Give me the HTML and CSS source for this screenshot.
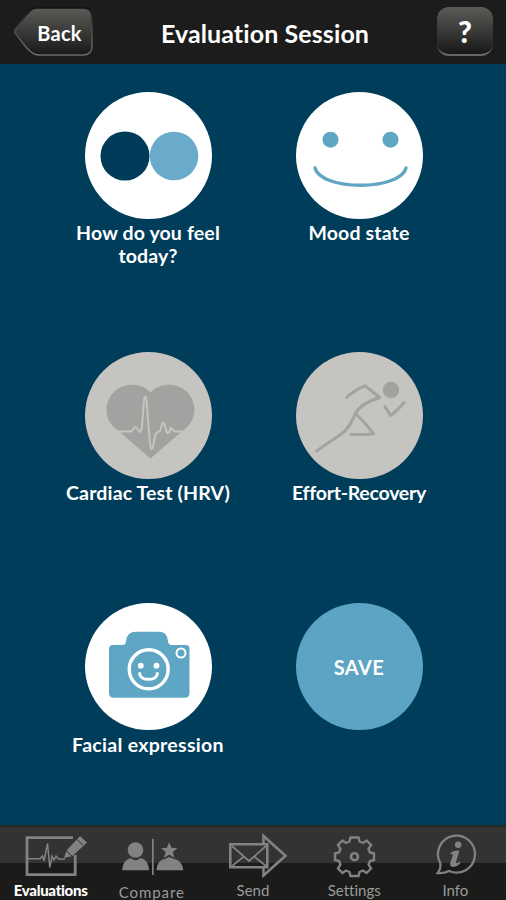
FILE: index.html
```
<!DOCTYPE html>
<html lang="en">
    <head>
        <meta charset="UTF-8">
        <title>Evaluation Session</title>
        <link rel="stylesheet" href="styles.css">
    </head>
    <body>
        <header class="header">
            <button class="back">
                <svg class="back-shape" viewBox="0 0 80 52">
                    <defs>
                        <linearGradient id="shade" x1="0" y1="0" x2="0" y2="1">
                            <stop offset="0" stop-color="#5b5b58"/>
                            <stop offset="0.5" stop-color="#3a3a38"/>
                            <stop offset="1" stop-color="#181818"/>
                        </linearGradient>
                        <linearGradient id="edge" x1="0" y1="0" x2="0" y2="1">
                            <stop offset="0" stop-color="#111"/>
                            <stop offset="0.45" stop-color="#484848"/>
                            <stop offset="1" stop-color="#6c6c6c"/>
                        </linearGradient>
                    </defs>
                    <path d="M22 2H69Q78 2 78 11V40Q78 49 69 49H25Q20 49 16 45C10 40 6 33 1 27Q0 25.500 1 24C6 17 11 10 16 5Q19 2 22 2Z" fill="url(#shade)" stroke="url(#edge)" stroke-width="1.500"/>
                </svg>
                <span class="back-text">Back</span>
            </button>
            <h1 class="title">Evaluation Session</h1>
            <button class="help">?</button>
        </header>
        <main class="tests">
            <div class="test">
                <svg class="circle" viewBox="0 0 127 127">
                    <circle cx="63.500" cy="63.500" r="63.500" fill="#fff"/>
                    <circle cx="40" cy="64" r="24.500" fill="#003b5a"/>
                    <circle cx="89" cy="64" r="24.300" fill="#69abc8"/>
                </svg>
                <div class="name">How do you feel<br>today?</div>
            </div>
            <div class="test">
                <svg class="circle" viewBox="0 0 127 127">
                    <circle cx="63.500" cy="63.500" r="63.500" fill="#fff"/>
                    <circle cx="34.500" cy="47.700" r="8" fill="#5fa6c4"/>
                    <circle cx="94.500" cy="47.700" r="8" fill="#5fa6c4"/>
                    <path d="M19 76C22 87 42 93.300 64.500 93.300S107 87 110 76" fill="none" stroke="#5fa6c4" stroke-width="3.400" stroke-linecap="round"/>
                </svg>
                <div class="name">Mood state</div>
            </div>
            <div class="test">
                <svg class="circle" viewBox="0 0 127 127">
                    <circle cx="63.500" cy="63.500" r="63.500" fill="#c5c4c0"/>
                    <path d="M65.500 40.500C56 30 39 30.500 29 40C19 50 19 66 29 75L65.500 106.500L102 75C112 66 112 50 102 40C92 30.500 75 30 65.500 40.500Z" fill="#a2a2a1"/>
                    <path d="M33 79.500H46L48.500 77Q50.500 73 52.500 77L54.500 80Q56.500 79.500 57 74L59 48Q60.200 41 61.500 48L65 92Q66.500 102 68.500 92L70.500 82Q73 79.500 75 79L77.500 71Q79 69.500 80 74L82 81Q84.500 82 85.500 76Q88 77 89.500 79.500H98" fill="none" stroke="#c5c4c0" stroke-width="2" stroke-linejoin="round"/>
                </svg>
                <div class="name">Cardiac Test (HRV)</div>
            </div>
            <div class="test">
                <svg class="circle" viewBox="0 0 127 127">
                    <circle cx="63.500" cy="63.500" r="63.500" fill="#c5c4c0"/>
                    <circle cx="95" cy="38" r="8.200" fill="#a2a2a1"/>
                    <g fill="none" stroke="#a2a2a1" stroke-width="3" stroke-linecap="round" stroke-linejoin="round">
                        <path d="M50.500 45.500Q59 38 69 33.700L83.500 45.500C74 48.500 64 53 59.500 61.500C55 71 52 77 46 81.500C38 87 29 93 20.500 99"/>
                        <path d="M59.500 61.500Q70 71 77.500 81.700Q66 83 55 82.300"/>
                        <path d="M89 54.500L94.500 63.500Q101 59 108 50.500"/>
                    </g>
                </svg>
                <div class="name effort">Effort-Recovery</div>
            </div>
            <div class="test">
                <svg class="circle" viewBox="0 0 127 127">
                    <circle cx="63.500" cy="63.500" r="63.500" fill="#fff"/>
                    <path d="M28 42H37Q41 42 41 38Q42 28.700 51 28.700H74Q82 28.700 83 38Q83 42 87 42H100.500Q104.500 42 104.500 46V90Q104.500 94.700 100 94.700H28.500Q24 94.700 24 90V46Q24 42 28 42Z" fill="#5fa6c4"/>
                    <g fill="none" stroke="#fff">
                        <circle cx="63.700" cy="66.300" r="19.500" stroke-width="3.400"/>
                        <circle cx="96" cy="50" r="4.500" stroke-width="2"/>
                        <path d="M54.700 70.500C55 78.300 72 78.300 72.300 70.500" stroke-width="3" stroke-linecap="round"/>
                    </g>
                    <circle cx="55.800" cy="62.700" r="2.900" fill="#fff"/>
                    <circle cx="71.500" cy="62.700" r="2.900" fill="#fff"/>
                </svg>
                <div class="name facial">Facial expression</div>
            </div>
            <div class="test">
                <button class="save">SAVE</button>
            </div>
        </main>
        <nav class="tabs">
            <div class="tab active">
                <svg class="icon" viewBox="0 0 80 48" fill="none" stroke="#808283">
                    <path d="M62 7.700H16V44.700H64.200V25" stroke-width="2.800"/>
                    <path d="M17 28.700H29L31.500 26L33 31L36.500 13.500L38.800 37.500L41 26L43 30L45 26L47.500 29H54" stroke-width="1.500"/>
                    <path d="M53 28L55.500 20.500L69 6L76 12.500L61.500 26Z" fill="#808283" stroke="none"/>
                    <path d="M66 9.500L72 15M55 20.500L61.500 26.500" stroke="#30302f" stroke-width="1"/>
                </svg>
                <span class="label">Evaluations</span>
            </div>
            <div class="tab">
                <svg class="icon" viewBox="0 0 80 48" fill="#808283">
                    <circle cx="23.500" cy="20" r="7.800"/>
                    <path d="M10.200 40.300C10.500 32 16 28 19 28.300Q23.500 32 28 28.300C32 28 36.800 32 37 40.300Z"/>
                    <path d="M40 9H41.700V45H40Z"/>
                    <path d="M57.200 12L59.400 17.800L65.500 18.200L60.700 22L62.400 28L57.200 24.600L52 28L53.700 22L49 18.200L55 17.800Z"/>
                    <path d="M44.500 40.300C45 32 50 29 53 29L57.200 27L62 29C66 29.500 71 33 71.200 40.300Z"/>
                </svg>
                <span class="label compare">Compare</span>
            </div>
            <div class="tab">
                <svg class="icon" viewBox="0 0 80 48" fill="none" stroke="#808283">
                    <path d="M17.300 14.300H54.300V37.300H17.300Z" stroke-width="2.600"/>
                    <path d="M50.500 13V6L72.500 25.700L50.500 45.500V38" stroke-width="2.600"/>
                    <path d="M19 16L36 31L53 16M19 36L31 26.500M53 36L41 26.500" stroke-width="1.700"/>
                </svg>
                <span class="label">Send</span>
            </div>
            <div class="tab">
                <svg class="icon" viewBox="0 0 80 48" fill="none" stroke="#808283" stroke-width="2.400">
                    <path d="M36.500 7.500H44.500L45.500 11.500L49 13L52.500 10.500L57 15L54.500 19L56 22.500L60 23.500V30L56 31L54.500 34.500L57 38.500L52.500 43L49 40.500L45.500 42L44.500 46H36.500L35.500 42L32 40.500L28.500 43L24 38.500L26.500 34.500L25 31L21 30V23.500L25 22.500L26.500 19L24 15L28.500 10.500L32 13L35.500 11.500Z"/>
                    <circle cx="40.500" cy="26.700" r="3.500" stroke-width="2.600"/>
                </svg>
                <span class="label">Settings</span>
            </div>
            <div class="tab">
                <svg class="icon" viewBox="0 0 80 48" fill="none" stroke="#808283">
                    <path d="M25.300 33A18.500 18.500 0 1 1 34 41Q29 43.500 22.800 43Q26 39 25.300 33Z" stroke-width="2.300"/>
                    <circle cx="43.200" cy="14.800" r="3.200" fill="#808283" stroke="none"/>
                    <path d="M35 23.500Q38.500 20 44.500 20.500L41 32Q41 34.500 44.500 31.500L45.500 33Q42 37 38 37Q34 36.500 35.500 32L38 24.500Q37 23.500 35.500 24.500Z" fill="#808283" stroke="none"/>
                </svg>
                <span class="label">Info</span>
            </div>
        </nav>
    </body>
</html>
```
FILE: styles.css
```
body {
    margin: 0;
    height: 900px;
    display: flex;
    flex-direction: column;
    overflow: hidden;
    background: #003d5b;
    color: #fff;
    font-family: Lato, "Liberation Sans", sans-serif;
    font-variant-ligatures: none;
}
button {
    padding: 0;
    border: 0;
    color: #fff;
    font-family: inherit;
    font-weight: bold;
}
.header {
    height: 64px;
    box-sizing: border-box;
    padding: 6px 14px 0;
    display: grid;
    grid-template-columns: 80px 1fr 56px;
    background: #1c1c1c;
}
.back {
    display: grid;
    height: 52px;
    background: none;
    font-size: 20px;
}
.back-shape,
.back-text {
    grid-area: 1 / 1;
}
.back-shape {
    width: 80px;
    height: 52px;
}
.back-text {
    padding: 14px 0 0 11px;
    line-height: 26px;
    letter-spacing: 0.3px;
}
.title {
    margin: 0;
    padding-left: 0;
    font-size: 25px;
    line-height: 55px;
    letter-spacing: 0.1px;
    text-align: center;
    white-space: nowrap;
}
.help {
    width: 56px;
    height: 49px;
    margin: 1px 0 0 1px;
    border-radius: 12px;
    border-bottom: 2px solid #666;
    background: linear-gradient(#5b5b58, #3a3a38 50%, #181818);
    font-size: 30px;
    font-weight: 900;
}
.tests {
    flex: 1;
    padding: 28px 0 0 1px;
    display: grid;
    grid-template-columns: 211px 211px;
    grid-template-rows: 260px 251px 1fr;
    justify-content: center;
}
.test {
    display: flex;
    flex-direction: column;
    align-items: center;
}
.circle {
    width: 127px;
    height: 127px;
}
.name {
    margin-top: 2px;
    font-size: 19.5px;
    font-weight: bold;
    line-height: 23px;
    letter-spacing: 0.15px;
    text-align: center;
    white-space: nowrap;
}
.effort {
    letter-spacing: -0.25px;
}
.facial {
    margin-top: 3px;
    letter-spacing: 0.3px;
}
.save {
    width: 127px;
    height: 127px;
    border-radius: 50%;
    background: #5ba4c4;
    font-size: 20px;
    letter-spacing: 0.4px;
}
.tabs {
    height: 75px;
    box-sizing: border-box;
    border-top: 2px solid #222827;
    padding-top: 3px;
    display: grid;
    grid-template-columns: repeat(5, 1fr);
    background: linear-gradient(#333331 36px, #1b1b1a 36px);
}
.tab {
    display: flex;
    flex-direction: column;
    align-items: center;
    color: #9a9a9a;
}
.icon {
    width: 80px;
    height: 48px;
}
.label {
    margin-top: 3px;
    font-size: 15px;
    line-height: 18px;
}
.compare {
    margin-top: 5px;
    letter-spacing: 0.9px;
}
.active {
    color: #fff;
    font-weight: 900;
    letter-spacing: -0.3px;
}
```
